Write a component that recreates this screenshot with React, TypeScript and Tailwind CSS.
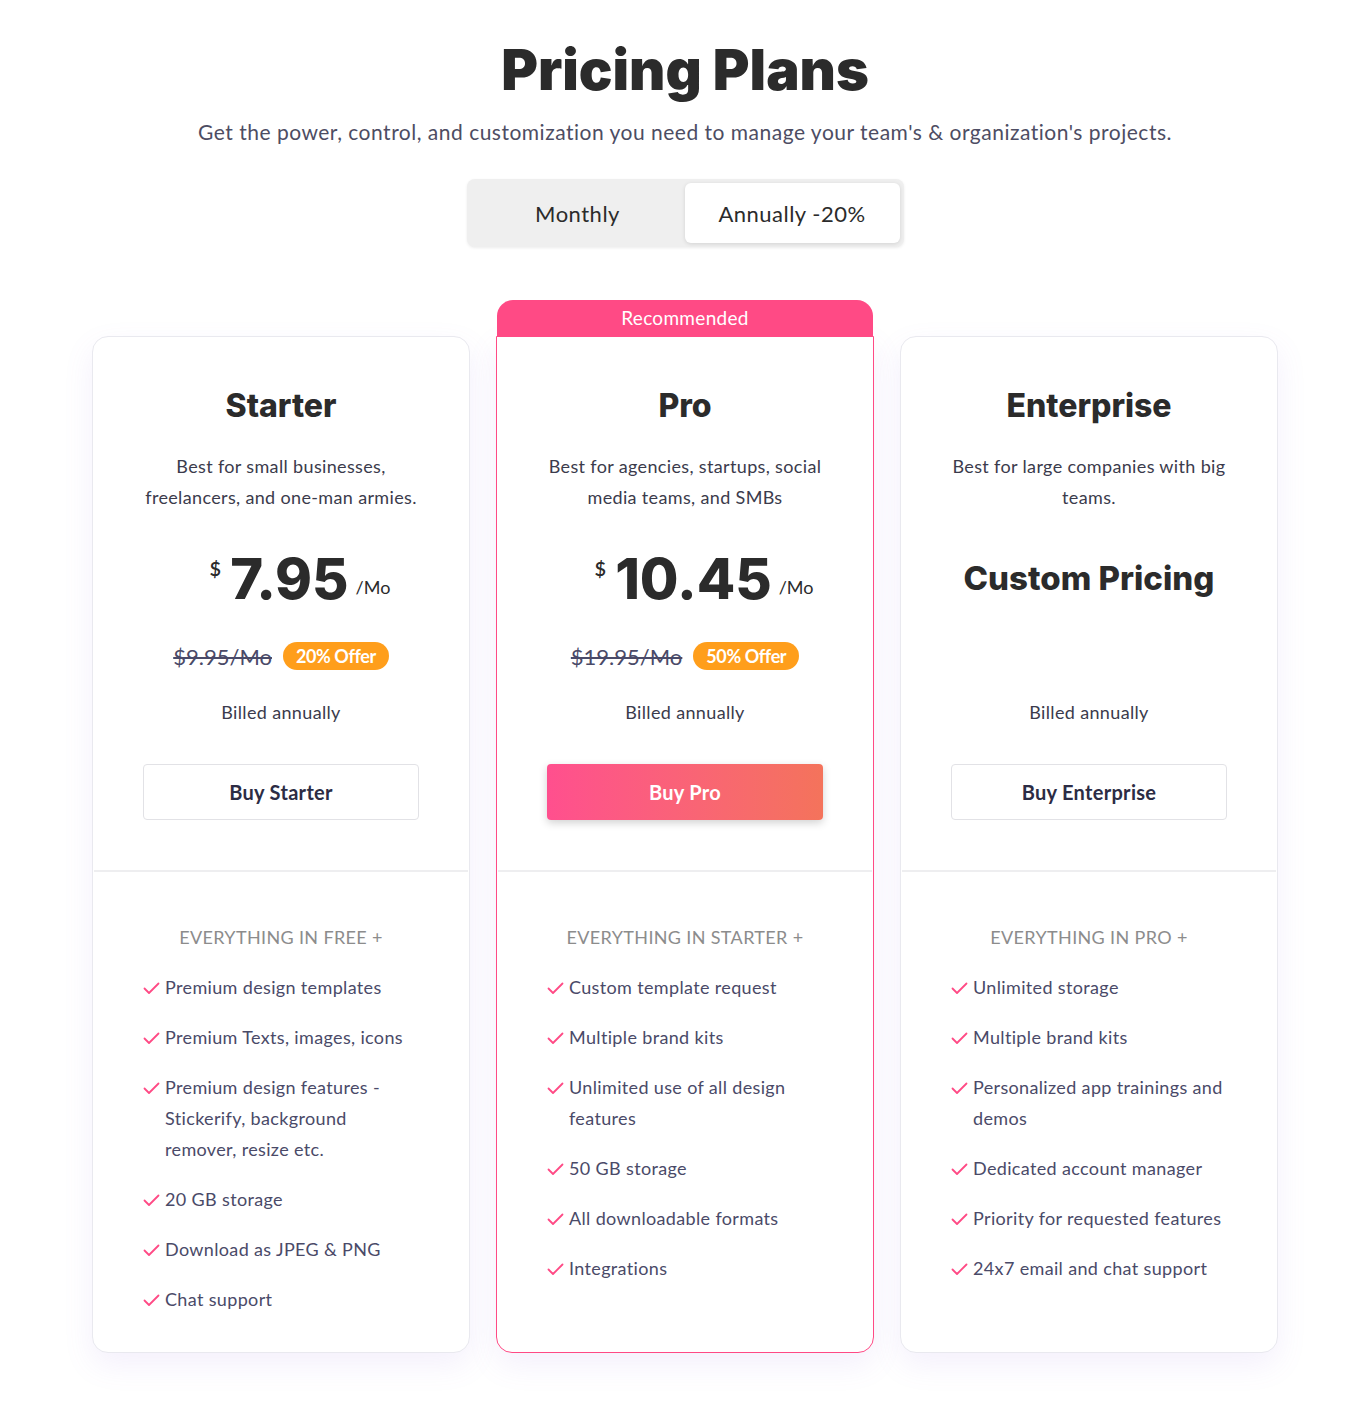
const plans = [
  {
    name: "Starter",
    desc: "Best for small businesses, freelancers, and one-man armies.",
    price: "7.95",
    old: "$9.95/Mo",
    offer: "20% Offer",
    button: "Buy Starter",
    heading: "EVERYTHING IN FREE +",
    features: [
      "Premium design templates",
      "Premium Texts, images, icons",
      "Premium design features - Stickerify, background remover, resize etc.",
      "20 GB storage",
      "Download as JPEG & PNG",
      "Chat support",
    ],
  },
  {
    name: "Pro",
    desc: "Best for agencies, startups, social media teams, and SMBs",
    price: "10.45",
    old: "$19.95/Mo",
    offer: "50% Offer",
    button: "Buy Pro",
    heading: "EVERYTHING IN STARTER +",
    recommended: true,
    features: [
      "Custom template request",
      "Multiple brand kits",
      "Unlimited use of all design features",
      "50 GB storage",
      "All downloadable formats",
      "Integrations",
    ],
  },
  {
    name: "Enterprise",
    desc: "Best for large companies with big teams.",
    price: "",
    old: "",
    offer: "",
    button: "Buy Enterprise",
    heading: "EVERYTHING IN PRO +",
    features: [
      "Unlimited storage",
      "Multiple brand kits",
      "Personalized app trainings and demos",
      "Dedicated account manager",
      "Priority for requested features",
      "24x7 email and chat support",
    ],
  },
];

const Check = () => (
  <svg width="17" height="13" viewBox="0 0 17 13" className="mt-[10px] shrink-0">
    <polyline
      points="1.5,6.5 6,11 15.5,1.5"
      fill="none"
      stroke="#ff4a85"
      strokeWidth="1.8"
      strokeLinecap="round"
      strokeLinejoin="round"
    />
  </svg>
);

const PlanCard = ({ plan }: { plan: (typeof plans)[number] }) => {
  return (
    <div
      className={`relative flex w-[378px] flex-col bg-white shadow-[0_12px_30px_rgba(150,110,230,0.10)] ${
        plan.recommended
          ? "rounded-b-[16px] border border-[#ff4a85]"
          : "rounded-[16px] border border-[#e9e9ef]"
      }`}
    >
      {plan.recommended && (
        <div className="absolute -top-[37px] left-0 right-0 flex h-[37px] items-center justify-center rounded-t-[16px] bg-[#ff4a85] text-[19px] tracking-[0.3px] text-white">
          Recommended
        </div>
      )}
      <div className="flex flex-col items-center px-[50px] pt-[49px] pb-[50px] text-center">
        <h2 className="font-['Inter'] text-[32px] font-extrabold leading-[40px] text-[#2b2b2b]">
          {plan.name}
        </h2>
        <p className="mt-[25px] text-[18px] leading-[31px] tracking-[0.35px] text-[#3b3b4c]">
          {plan.desc}
        </p>
        {plan.price ? (
          <>
            <div className="mt-[36px] flex h-[60px] items-center justify-center pl-[38px]">
              <span className="-mt-[22px] mr-[9px] text-[20px] font-semibold text-[#2b2b2b]">$</span>
              <span className="font-['Inter'] text-[56px] font-extrabold leading-none text-[#2b2b2b]">
                {plan.price}
              </span>
              <span className="ml-[7px] mt-[16px] text-[18px] text-[#2b2b2b]">/Mo</span>
            </div>
            <div className="mt-[33px] flex h-[28px] items-center gap-[11px]">
              <span className="text-[22px] text-[#4a4a68] line-through decoration-[1.5px]">
                {plan.old}
              </span>
              <span className="flex h-[28px] items-center rounded-full bg-[#ff9e1b] px-[13px] text-[18px] font-bold tracking-[-0.4px] text-white">
                {plan.offer}
              </span>
            </div>
          </>
        ) : (
          <div className="mt-[36px] flex h-[121px] flex-col items-center">
            <div className="flex h-[60px] items-center font-['Inter'] text-[33px] font-extrabold text-[#2b2b2b]">
              Custom Pricing
            </div>
          </div>
        )}
        <p className="mt-[27px] text-[18px] leading-[31px] tracking-[0.35px] text-[#3b3b4c]">
          Billed annually
        </p>
        <button
          className={`mt-[36px] flex h-[56px] w-full items-center justify-center rounded-[4px] text-[20px] font-bold tracking-[0.3px] ${
            plan.recommended
              ? "bg-gradient-to-r from-[#ff4f8e] to-[#f4735b] text-white shadow-[0_3px_8px_rgba(0,0,0,0.18)]"
              : "border border-[#e2e2e6] bg-white text-[#2c2c44]"
          }`}
        >
          {plan.button}
        </button>
      </div>
      <div className="mx-[1px] border-t-2 border-[#eeeef0]" />
      <div className="flex flex-col gap-[19px] px-[50px] pt-[50px] pb-[37px]">
        <p className="text-center text-[18px] leading-[31px] tracking-[0.35px] text-[#8c8c8c]">
          {plan.heading}
        </p>
        {plan.features.map((f) => (
          <div
            key={f}
            className="flex gap-[5px] text-[18px] leading-[31px] tracking-[0.35px] text-[#4a4a68]"
          >
            <Check />
            <span>{f}</span>
          </div>
        ))}
      </div>
    </div>
  );
};

export default function App() {
  return (
    <div className="min-h-[1407px] bg-white pl-[17px] font-['Lato'] text-[#2b2b2b]">
      <div className="flex flex-col items-center pt-[38px]">
        <h1 className="font-['Inter'] text-[56px] font-black leading-[64px] text-[#2b2b2b]">
          Pricing Plans
        </h1>
        <p className="mt-[15px] text-[21px] leading-[30px] tracking-[0.5px] text-[#4d4d63]">
          Get the power, control, and customization you need to manage your team's &amp;
          organization's projects.
        </p>
        <div className="mt-[32px] flex h-[68px] w-[437px] items-center rounded-[8px] bg-[#efefef] p-[4px] shadow-[0_1px_3px_rgba(0,0,0,0.08)]">
          <button className="flex h-full flex-1 items-center justify-center text-[22px] tracking-[0.5px] text-[#2b2b2b]">
            Monthly
          </button>
          <button className="flex h-full w-[215px] items-center justify-center rounded-[6px] bg-white text-[22px] tracking-[0.5px] text-[#2b2b2b] shadow-[0_1px_4px_rgba(0,0,0,0.12)]">
            Annually -20%
          </button>
        </div>
        <div className="mt-[89px] flex items-stretch gap-[26px]">
          {plans.map((p) => (
            <PlanCard key={p.name} plan={p} />
          ))}
        </div>
      </div>
    </div>
  );
}
